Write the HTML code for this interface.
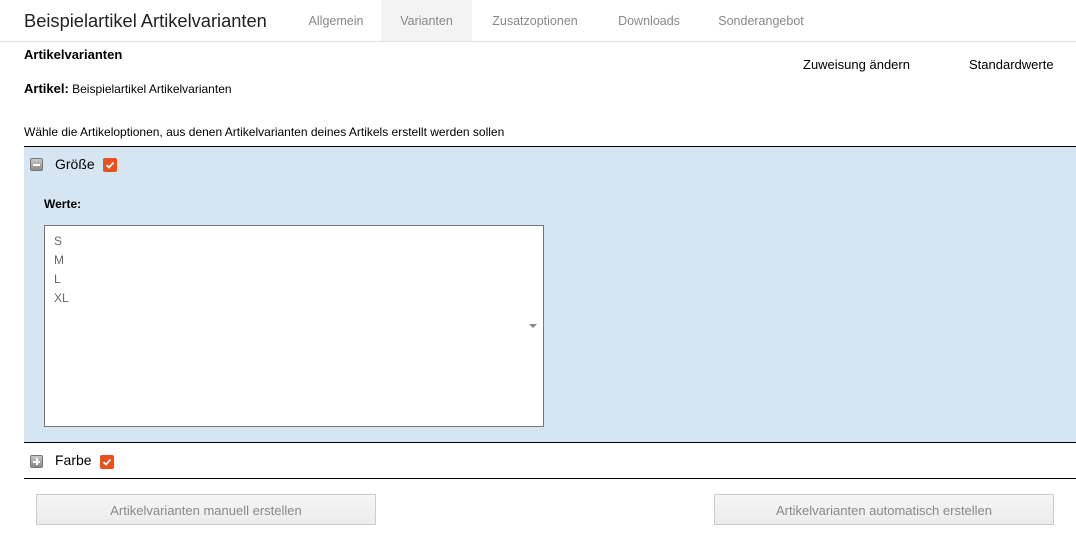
<!DOCTYPE html>
<html><head><meta charset="utf-8"><style>
*{margin:0;padding:0;box-sizing:border-box}
body{width:1076px;height:540px;background:#fff;font-family:"Liberation Sans",sans-serif;position:relative;overflow:hidden;color:#000}
.a{position:absolute;white-space:nowrap}
.tab{position:absolute;top:0;height:41px;line-height:43px;font-size:12.5px;color:#888;text-align:center}
.cb{position:absolute;width:14px;height:14px;background:#e8501e;border-radius:2px}
.cb svg{position:absolute;left:2px;top:2px}
.tg{position:absolute;width:13px;height:13px;background:linear-gradient(#c8c8c8,#8a8a8a);border:1px solid #777;border-radius:2px}
.tg i{position:absolute;left:2px;top:5px;width:7px;height:1.5px;background:#fff}
.btn{position:absolute;top:494px;height:31px;border:1px solid #ccc;background:linear-gradient(#f5f5f5,#ececec);color:#888;font-size:13px;line-height:32px;text-align:center}
</style></head><body>
<div class="a" style="left:24px;top:10px;font-size:18.3px;color:#222">Beispielartikel Artikelvarianten</div>
<div class="tab" style="left:296px;width:80px">Allgemein</div>
<div class="tab" style="left:381px;width:91px;background:#f3f3f3">Varianten</div>
<div class="tab" style="left:480px;width:110px">Zusatzoptionen</div>
<div class="tab" style="left:605px;width:88px">Downloads</div>
<div class="tab" style="left:707px;width:108px">Sonderangebot</div>
<div class="a" style="left:0;top:41px;width:1076px;height:1px;background:#e0e0e0"></div>
<div class="a" style="left:24px;top:47px;font-size:13px;font-weight:bold">Artikelvarianten</div>
<div class="a" style="left:803px;top:57px;font-size:13px">Zuweisung ändern</div>
<div class="a" style="left:969px;top:57px;font-size:13px">Standardwerte</div>
<div class="a" style="left:24px;top:81px;font-size:12px"><b style="font-size:13px">Artikel:</b> Beispielartikel Artikelvarianten</div>
<div class="a" style="left:24px;top:125px;font-size:12px">Wähle die Artikeloptionen, aus denen Artikelvarianten deines Artikels erstellt werden sollen</div>
<div class="a" style="left:24px;top:146px;width:1052px;height:1px;background:#000"></div>
<div class="a" style="left:24px;top:147px;width:1052px;height:295px;background:#d6e5f2"></div>
<div class="tg" style="left:30px;top:158px"><i></i></div>
<div class="a" style="left:55px;top:156px;font-size:14px">Größe</div>
<div class="cb" style="left:103px;top:158px"><svg width="10" height="10" viewBox="0 0 10 10"><path d="M1.5 5.2L4 7.5L8.5 2.5" stroke="#fff" stroke-width="1.8" fill="none"/></svg></div>
<div class="a" style="left:44px;top:197px;font-size:12px;font-weight:bold">Werte:</div>
<div class="a" style="left:44px;top:225px;width:500px;height:202px;background:#fff;border:1px solid #777"></div>
<div class="a" style="left:54px;top:232px;font-size:12px;color:#666;line-height:19px">S<br>M<br>L<br>XL</div>
<div class="a" style="left:529px;top:324px;width:0;height:0;border-left:4px solid transparent;border-right:4px solid transparent;border-top:4px solid #888"></div>
<div class="a" style="left:24px;top:442px;width:1052px;height:1px;background:#000"></div>
<div class="tg" style="left:30px;top:455px"><i></i><i style="left:5px;top:2px;width:1.5px;height:7px"></i></div>
<div class="a" style="left:55px;top:452px;font-size:14px">Farbe</div>
<div class="cb" style="left:100px;top:455px"><svg width="10" height="10" viewBox="0 0 10 10"><path d="M1.5 5.2L4 7.5L8.5 2.5" stroke="#fff" stroke-width="1.8" fill="none"/></svg></div>
<div class="a" style="left:24px;top:478px;width:1052px;height:1px;background:#000"></div>
<div class="btn" style="left:36px;width:340px">Artikelvarianten manuell erstellen</div>
<div class="btn" style="left:714px;width:340px">Artikelvarianten automatisch erstellen</div>
</body></html>
